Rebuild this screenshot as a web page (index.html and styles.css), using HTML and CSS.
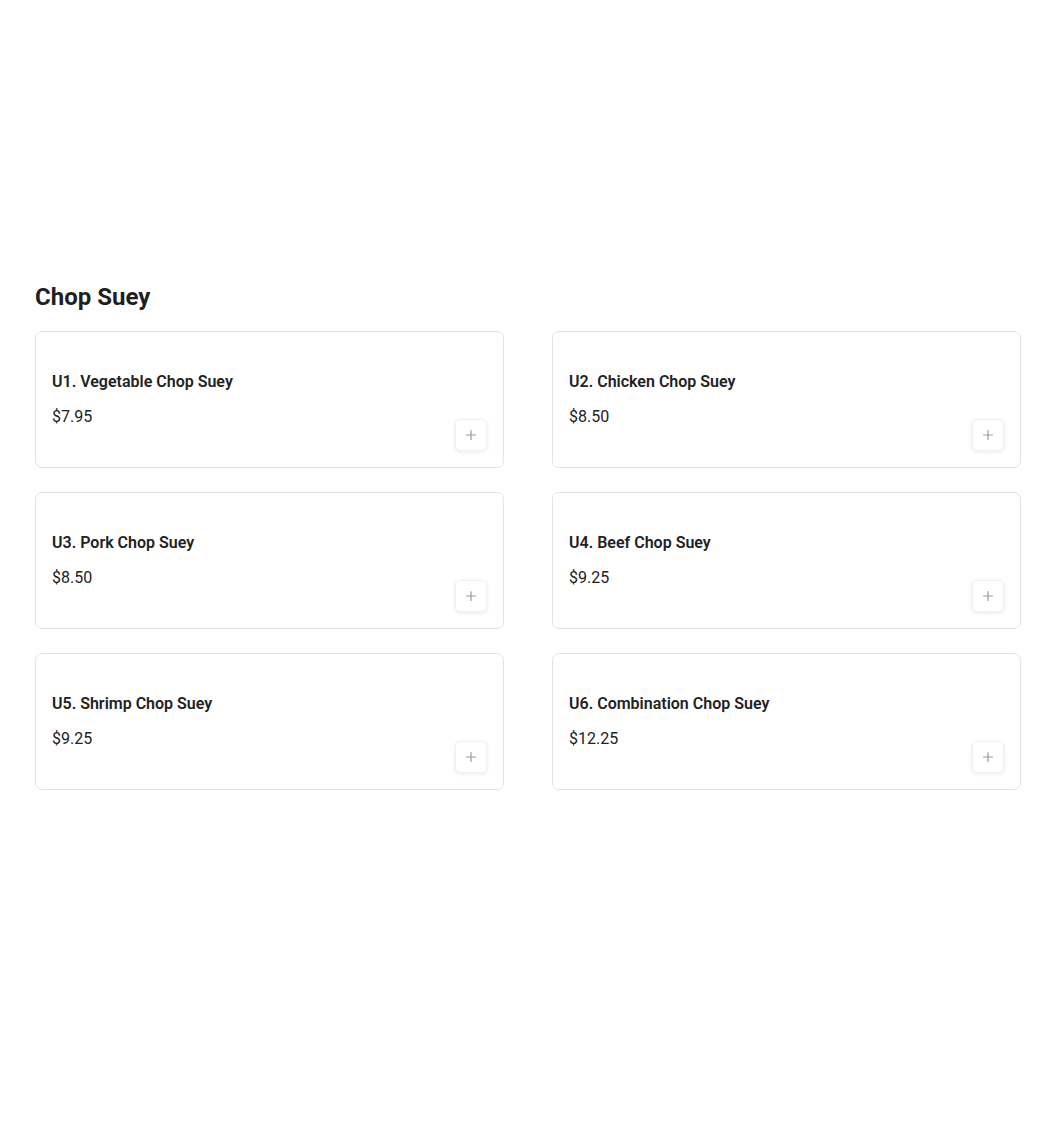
FILE: index.html
```html
<!DOCTYPE html>
<html lang="en">
<head>
<meta charset="utf-8">
<title>Chop Suey</title>
<link rel="stylesheet" href="styles.css">
</head>
<body>
<main class="page">
  <section class="category">
    <h2 class="category-title">Chop Suey</h2>
    <div class="menu-grid">
      <article class="item-card">
        <div class="item-info">
          <h3 class="item-name">U1. Vegetable Chop Suey</h3>
          <p class="item-price">$7.95</p>
        </div>
        <button class="add-btn" aria-label="Add"><svg viewBox="0 0 12 12" width="12" height="12"><path d="M6 1.5v9M1.5 6h9" stroke="currentColor" stroke-width="1.2" fill="none" stroke-linecap="round"/></svg></button>
      </article>
      <article class="item-card">
        <div class="item-info">
          <h3 class="item-name">U2. Chicken Chop Suey</h3>
          <p class="item-price">$8.50</p>
        </div>
        <button class="add-btn" aria-label="Add"><svg viewBox="0 0 12 12" width="12" height="12"><path d="M6 1.5v9M1.5 6h9" stroke="currentColor" stroke-width="1.2" fill="none" stroke-linecap="round"/></svg></button>
      </article>
      <article class="item-card">
        <div class="item-info">
          <h3 class="item-name">U3. Pork Chop Suey</h3>
          <p class="item-price">$8.50</p>
        </div>
        <button class="add-btn" aria-label="Add"><svg viewBox="0 0 12 12" width="12" height="12"><path d="M6 1.5v9M1.5 6h9" stroke="currentColor" stroke-width="1.2" fill="none" stroke-linecap="round"/></svg></button>
      </article>
      <article class="item-card">
        <div class="item-info">
          <h3 class="item-name">U4. Beef Chop Suey</h3>
          <p class="item-price">$9.25</p>
        </div>
        <button class="add-btn" aria-label="Add"><svg viewBox="0 0 12 12" width="12" height="12"><path d="M6 1.5v9M1.5 6h9" stroke="currentColor" stroke-width="1.2" fill="none" stroke-linecap="round"/></svg></button>
      </article>
      <article class="item-card">
        <div class="item-info">
          <h3 class="item-name">U5. Shrimp Chop Suey</h3>
          <p class="item-price">$9.25</p>
        </div>
        <button class="add-btn" aria-label="Add"><svg viewBox="0 0 12 12" width="12" height="12"><path d="M6 1.5v9M1.5 6h9" stroke="currentColor" stroke-width="1.2" fill="none" stroke-linecap="round"/></svg></button>
      </article>
      <article class="item-card">
        <div class="item-info">
          <h3 class="item-name">U6. Combination Chop Suey</h3>
          <p class="item-price">$12.25</p>
        </div>
        <button class="add-btn" aria-label="Add"><svg viewBox="0 0 12 12" width="12" height="12"><path d="M6 1.5v9M1.5 6h9" stroke="currentColor" stroke-width="1.2" fill="none" stroke-linecap="round"/></svg></button>
      </article>
    </div>
  </section>
</main>
</body>
</html>
```
FILE: styles.css
```css
* { box-sizing: border-box; }
html, body { margin: 0; padding: 0; background: #fff; }
body {
  font-family: Roboto, "Liberation Sans", sans-serif;
  color: #1f1f1f;
}
.page {
  padding: 281px 29px 0 35px;
}
.category-title {
  margin: 0 0 18px;
  font-size: 24px;
  line-height: 32px;
  font-weight: 700;
  color: #1f1f1f;
}
.menu-grid {
  display: grid;
  grid-template-columns: 1fr 1fr;
  column-gap: 48px;
  row-gap: 24px;
}
.item-card {
  display: flex;
  justify-content: space-between;
  align-items: center;
  min-height: 137px;
  padding: 16px;
  border: 1px solid #e3e3e3;
  border-radius: 7px;
  background: #fff;
}
.item-info {
  display: flex;
  flex-direction: column;
  gap: 12px;
}
.item-name {
  margin: 0;
  font-size: 16px;
  line-height: 22px;
  font-weight: 600;
  color: #222;
}
.item-price {
  margin: 0;
  font-size: 16px;
  line-height: 24px;
  font-weight: 400;
  color: #222;
}
.add-btn {
  align-self: flex-end;
  width: 32px;
  height: 32px;
  padding: 0;
  border: 1px solid #f1f1f1;
  border-radius: 5px;
  background: #fff;
  color: #9a9a9a;
  box-shadow: 0 1px 4px rgba(0,0,0,0.08);
  display: flex;
  align-items: center;
  justify-content: center;
  cursor: pointer;
}
```
